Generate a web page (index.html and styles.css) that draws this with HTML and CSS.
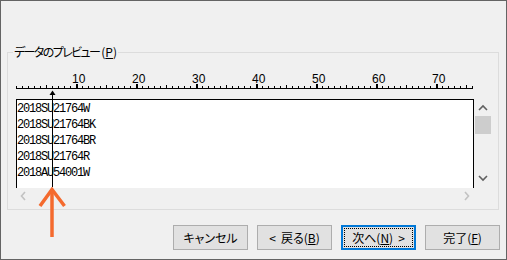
FILE: index.html
```html
<!DOCTYPE html>
<html lang="ja">
<head>
    <meta charset="UTF-8">
    <title>テキスト ファイル ウィザード</title>
    <link rel="stylesheet" href="styles.css">
</head>
<body>
    <div class="dialog">
        <div class="group">
            <div class="group-title"><span class="kana">データのプレビュー</span>(<u>P</u>)</div>

            <!-- ルーラー -->
            <svg class="ruler" width="460" height="27" viewBox="0 0 460 27">
                <defs>
                    <pattern id="minor" width="6" height="2" y="14" patternUnits="userSpaceOnUse">
                        <rect width="1" height="2" fill="#000"/>
                    </pattern>
                    <pattern id="five" width="60" height="3" y="13" patternUnits="userSpaceOnUse">
                        <rect x="30" width="1" height="3" fill="#000"/>
                    </pattern>
                    <pattern id="major" width="60" height="4" y="12" patternUnits="userSpaceOnUse">
                        <rect width="2" height="4" fill="#000"/>
                    </pattern>
                </defs>
                <rect x="0" y="14" width="457" height="2" fill="url(#minor)"/>
                <rect x="0" y="13" width="457" height="3" fill="url(#five)"/>
                <rect x="60" y="12" width="400" height="4" fill="url(#major)"/>
                <rect x="0" y="16" width="457" height="1" fill="#000"/>
                <g class="ruler-num">
                    <text x="56" y="11">10</text>
                    <text x="116" y="11">20</text>
                    <text x="176" y="11">30</text>
                    <text x="236" y="11">40</text>
                    <text x="296" y="11">50</text>
                    <text x="356" y="11">60</text>
                    <text x="416" y="11">70</text>
                </g>
            </svg>

            <div class="viewer">
                <div class="preview-text">
                    <div>2018SU21764W</div>
                    <div>2018SU21764BK</div>
                    <div>2018SU21764BR</div>
                    <div>2018SU21764R</div>
                    <div>2018AU54001W</div>
                </div>
                <div class="vscroll">
                    <svg class="chev" width="18" height="16" viewBox="0 0 18 16">
                        <path d="M5 10 L9 6 L13 10" fill="none" stroke="#606060" stroke-width="1.6"/>
                    </svg>
                    <div class="thumb"></div>
                    <div class="spacer"></div>
                    <svg class="chev" width="18" height="16" viewBox="0 0 18 16">
                        <path d="M5 6 L9 10 L13 6" fill="none" stroke="#606060" stroke-width="1.6"/>
                    </svg>
                </div>
                <div class="hscroll">
                    <svg width="6" height="17" viewBox="0 0 6 17">
                        <path d="M5 4 L1.5 8 L5 12" fill="none" stroke="#c2c2c2" stroke-width="1.6"/>
                    </svg>
                    <svg width="6" height="17" viewBox="0 0 6 17">
                        <path d="M1 4 L4.5 8 L1 12" fill="none" stroke="#c2c2c2" stroke-width="1.6"/>
                    </svg>
                </div>
            </div>

            <!-- 区切り位置 -->
            <svg class="marker" width="7" height="97" viewBox="0 0 7 97">
                <path d="M0.5 5 L3.5 0.5 L6.5 5 Z" fill="#000"/>
                <rect x="3" y="2" width="1" height="95" fill="#000"/>
            </svg>
        </div>

        <div class="buttons">
            <button class="btn">キャンセル</button>
            <button class="btn"><span class="gt">&lt;</span>戻る(<u>B</u>)</button>
            <button class="btn focused">次へ(<u>N</u>)<span class="lt">&gt;</span></button>
            <button class="btn">完了(<u>F</u>)</button>
        </div>

        <!-- 注釈の矢印 -->
        <svg class="callout" width="30" height="53" viewBox="0 0 30 53">
            <path d="M2 19 L14 2.5 L26.5 19" fill="none" stroke="#f46a2e" stroke-width="3.5"/>
            <path d="M14 3 L14 50" fill="none" stroke="#f46a2e" stroke-width="3.5"/>
        </svg>
    </div>
</body>
</html>
```

FILE: styles.css
```css
* {
    margin: 0;
    padding: 0;
    box-sizing: border-box;
}

body {
    background-color: #f0f0f0;
    font-family: 'Noto Sans CJK JP', sans-serif;
    font-size: 12px;
    color: #000;
}

.dialog {
    position: relative;
    width: 507px;
    height: 260px;
    border: 1px solid #646464;
    background-color: #f0f0f0;
}

/* グループ枠 */
.group {
    position: relative;
    width: 492px;
    height: 158px;
    margin: 51px 0 0 6px;
    padding: 19px 0 0 8px;
    border: 1px solid #dcdcdc;
}

.group-title {
    position: absolute;
    top: -10px;
    left: 5px;
    padding: 0 1px;
    line-height: 18px;
    background-color: #f0f0f0;
    font-feature-settings: "palt";
}

.group-title .kana {
    letter-spacing: -1.6px;
    margin-right: 2px;
}

.ruler {
    display: block;
}

.ruler-num {
    font-family: 'Liberation Sans', sans-serif;
    font-size: 12px;
    fill: #000;
}

/* プレビュー */
.viewer {
    display: grid;
    grid-template-columns: 458px 18px;
    grid-template-rows: 89px 17px;
}

.preview-text {
    background-color: #fff;
    border: 1px solid #000;
    border-bottom: none;
    padding-top: 1px;
    font-family: 'Liberation Mono', monospace;
    font-size: 12px;
    letter-spacing: -1.2px;
    line-height: 16px;
    overflow: hidden;
    white-space: nowrap;
}

.vscroll {
    display: flex;
    flex-direction: column;
    padding: 1px 0 2px 0;
}

.chev {
    display: block;
}

.thumb {
    height: 18px;
    width: 16px;
    margin-left: 1px;
    background-color: #cdcdcd;
}

.spacer {
    flex: 1;
}

.hscroll {
    display: flex;
    justify-content: space-between;
    padding: 0 4px;
}

.marker {
    position: absolute;
    left: 41px;
    top: 37px;
}

/* ボタン */
.buttons {
    display: flex;
    justify-content: flex-end;
    gap: 9px;
    padding-right: 6px;
    margin-top: 15px;
}

.btn {
    width: 75px;
    height: 25px;
    border: 1px solid #adadad;
    background-color: #e1e1e1;
    font-family: 'Noto Sans CJK JP', sans-serif;
    font-size: 12px;
    font-feature-settings: "palt";
    color: #000;
    line-height: 1;
}

.btn .gt {
    margin-right: 5px;
}

.btn .lt {
    margin-left: 5px;
}

.btn.focused {
    border: 2px solid #0078d7;
    outline: 1px dotted #000;
    outline-offset: -4px;
}

.callout {
    position: absolute;
    left: 37px;
    top: 186px;
}
```
